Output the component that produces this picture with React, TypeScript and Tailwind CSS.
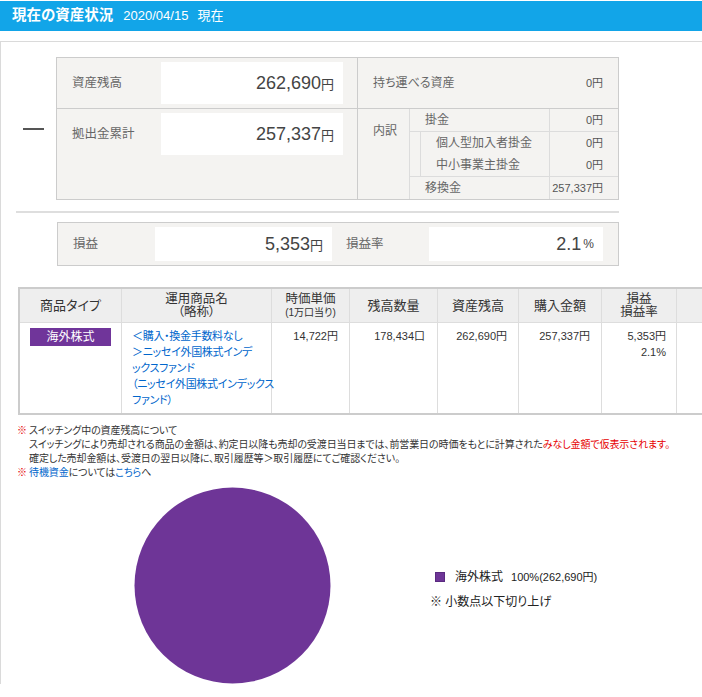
import React from "react";

function Yen({ value, big }: { value: string; big?: boolean }) {
  return big ? (
    <span className="text-[#444]">
      <span className="text-[18px] font-light">{value}</span>
      <span className="text-[13px]">円</span>
    </span>
  ) : (
    <span>{value}円</span>
  );
}

function SubRow({ label, value }: { label: string; value: string }) {
  return (
    <div className="h-[22px] flex items-center">
      <span className="flex-1 pl-[15px] text-[12px] text-[#666]">{label}</span>
      <span className="w-[69px] h-full border-l border-[#dcdcdc] flex items-center justify-end pr-[15px] text-[11px] text-[#555]">
        {value}
      </span>
    </div>
  );
}

export default function App() {
  return (
    <div className="w-[702px] h-[697px] overflow-hidden bg-white text-[#333] font-['Liberation_Sans','Noto_Sans_CJK_JP',sans-serif] [font-feature-settings:'palt']">
      {/* Header */}
      <header className="mt-px h-[30px] bg-[#12a5e8] flex items-center pl-[12px] text-white">
        <h1 className="text-[14.5px] font-bold">現在の資産状況</h1>
        <span className="ml-[10px] text-[13px]">2020/04/15</span>
        <span className="ml-[9px] text-[13px]">現在</span>
      </header>

      <div className="mt-[10px] w-[820px] border-t border-l border-[#dadada] pt-[15px]">
        {/* Summary */}
        <div className="flex items-center">
          <div className="ml-[22px] w-[21px] h-[2px] bg-[#555]" />
          <div className="ml-[12px] w-[563px] border border-[#ccc] bg-[#f4f3f1] flex">
            <div className="w-[300px] flex flex-col">
              <div className="h-[51px] border-b border-[#ccc] flex items-center">
                <span className="flex-1 pl-[15px] text-[12.5px] text-[#666]">資産残高</span>
                <div className="w-[182px] h-[42px] mr-[14px] bg-white flex items-center justify-end pr-[9px]">
                  <Yen value="262,690" big />
                </div>
              </div>
              <div className="h-[90px] pt-[4px] flex items-start">
                <span className="flex-1 pl-[15px] h-[42px] flex items-center text-[12.5px] text-[#666]">拠出金累計</span>
                <div className="w-[182px] h-[42px] mr-[14px] bg-white flex items-center justify-end pr-[9px]">
                  <Yen value="257,337" big />
                </div>
              </div>
            </div>
            <div className="flex-1 border-l border-[#ccc] flex flex-col">
              <div className="h-[51px] border-b border-[#ccc] flex items-center justify-between pl-[15px] pr-[15px]">
                <span className="text-[12px] text-[#666]">持ち運べる資産</span>
                <span className="text-[11px] text-[#555]">0円</span>
              </div>
              <div className="h-[90px] flex">
                <div className="w-[51px] pl-[15px] pt-[13px] text-[12px] text-[#666]">内訳</div>
                <div className="flex-1 border-l border-[#dcdcdc] flex flex-col">
                  <div className="border-b border-[#dcdcdc]">
                    <SubRow label="掛金" value="0円" />
                  </div>
                  <div className="flex border-b border-[#dcdcdc]">
                    <div className="w-[10px]" />
                    <div className="flex-1 border-l border-[#dcdcdc]">
                      <SubRow label="個人型加入者掛金" value="0円" />
                      <SubRow label="中小事業主掛金" value="0円" />
                    </div>
                  </div>
                  <SubRow label="移換金" value="257,337円" />
                </div>
              </div>
            </div>
          </div>
        </div>

        {/* Separator */}
        <div className="mt-[11px] ml-[15px] w-[603px] h-[2px] bg-[#dedede]" />

        {/* Profit */}
        <div className="mt-[9px] ml-[56px] w-[562px] h-[44px] border border-[#ccc] bg-[#f4f3f1] flex items-center">
          <span className="w-[97px] pl-[15px] text-[12.5px] text-[#666]">損益</span>
          <div className="w-[177px] h-[34px] bg-white flex items-center justify-end pr-[9px]">
            <Yen value="5,353" big />
          </div>
          <span className="w-[97px] pl-[14px] text-[12.5px] text-[#666]">損益率</span>
          <div className="w-[174px] h-[34px] bg-white flex items-center justify-end pr-[9px] text-[#444]">
            <span className="text-[18px] font-light">2.1</span>
            <span className="text-[12px] ml-[2px]">%</span>
          </div>
        </div>

        {/* Holdings table */}
        <div className="mt-[21px] ml-[17px] w-[800px] border-t-2 border-l-2 border-b-2 border-[#ccc] grid grid-cols-[102px_150px_78px_88px_81px_83px_75px_243px]">
          <div className="h-[34px] bg-[#eee] border-r border-b border-[#ddd] flex items-center justify-center text-[13px]">商品タイプ</div>
          <div className="h-[34px] bg-[#eee] border-r border-b border-[#ddd] flex flex-col items-center justify-center text-[12.5px] leading-[13px]">
            <span>運用商品名</span>
            <span>（略称）</span>
          </div>
          <div className="h-[34px] bg-[#eee] border-r border-b border-[#ddd] flex flex-col items-center justify-center leading-[13px]">
            <span className="text-[12.5px]">時価単価</span>
            <span className="text-[10px]">(1万口当り)</span>
          </div>
          <div className="h-[34px] bg-[#eee] border-r border-b border-[#ddd] flex items-center justify-center text-[13px]">残高数量</div>
          <div className="h-[34px] bg-[#eee] border-r border-b border-[#ddd] flex items-center justify-center text-[13px]">資産残高</div>
          <div className="h-[34px] bg-[#eee] border-r border-b border-[#ddd] flex items-center justify-center text-[13px]">購入金額</div>
          <div className="h-[34px] bg-[#eee] border-r border-b border-[#ddd] flex flex-col items-center justify-center text-[12.5px] leading-[13px]">
            <span>損益</span>
            <span>損益率</span>
          </div>
          <div className="h-[34px] bg-[#eee] border-b border-[#ddd]" />

          <div className="h-[90px] border-r border-[#ddd] pt-[5px]">
            <div className="mx-auto w-[81px] h-[18px] bg-[#70359a] text-white text-[12px] flex items-center justify-center">海外株式</div>
          </div>
          <div className="h-[90px] border-r border-[#ddd] pl-[10px] pt-[5px] text-[11px] leading-[16px] text-[#0066cc] whitespace-nowrap tracking-[-0.3px]">
            ＜購入・換金手数料なし<br />
            ＞ニッセイ外国株式インデ<br />
            ックスファンド<br />
            （ニッセイ外国株式インデックス<br />
            ファンド）
          </div>
          <div className="h-[90px] border-r border-[#ddd] pr-[11px] pt-[5px] text-right text-[11px] leading-[16px]">14,722円</div>
          <div className="h-[90px] border-r border-[#ddd] pr-[12px] pt-[5px] text-right text-[11px] leading-[16px]">178,434口</div>
          <div className="h-[90px] border-r border-[#ddd] pr-[11px] pt-[5px] text-right text-[11px] leading-[16px]">262,690円</div>
          <div className="h-[90px] border-r border-[#ddd] pr-[11px] pt-[5px] text-right text-[11px] leading-[16px]">257,337円</div>
          <div className="h-[90px] border-r border-[#ddd] pr-[10px] pt-[5px] text-right text-[11px] leading-[16px]">
            5,353円<br />2.1%
          </div>
          <div className="h-[90px]" />
        </div>

        {/* Notes */}
        <div className="mt-[9px] pl-[16px] text-[10px] leading-[14px] text-[#333] whitespace-nowrap tracking-[-0.1px]">
          <div className="flex">
            <span className="w-[12px] text-[#e60000]">※</span>
            <div>
              <p>スイッチング中の資産残高について</p>
              <p>
                スイッチングにより売却される商品の金額は、約定日以降も売却の受渡日当日までは、前営業日の時価をもとに計算された
                <span className="text-[#e60000]">みなし金額で仮表示されます。</span>
              </p>
              <p>確定した売却金額は、受渡日の翌日以降に、取引履歴等＞取引履歴にてご確認ください。</p>
            </div>
          </div>
          <div className="flex">
            <span className="w-[12px] text-[#e60000]">※</span>
            <p>
              <span className="text-[#0066cc]">待機資金</span>については<span className="text-[#0066cc]">こちら</span>へ
            </p>
          </div>
        </div>

        {/* Chart */}
        <div className="mt-[7px] flex items-start">
          <svg className="ml-[133px]" width="197" height="197" viewBox="0 0 197 197">
            <circle cx="98.5" cy="98.5" r="98" fill="#6e3597" />
          </svg>
          <div className="ml-[99px] mt-[82px] text-[12px] leading-[16px] text-[#222]">
            <div className="flex items-center pl-[5px]">
              <span className="w-[10px] h-[10px] bg-[#6e3597] border border-[#5a2a80]" />
              <span className="ml-[10px]">海外株式</span>
              <span className="ml-[8px] text-[11px]">100%(262,690円)</span>
            </div>
            <div className="mt-[9px]">※ 小数点以下切り上げ</div>
          </div>
        </div>
      </div>
    </div>
  );
}
